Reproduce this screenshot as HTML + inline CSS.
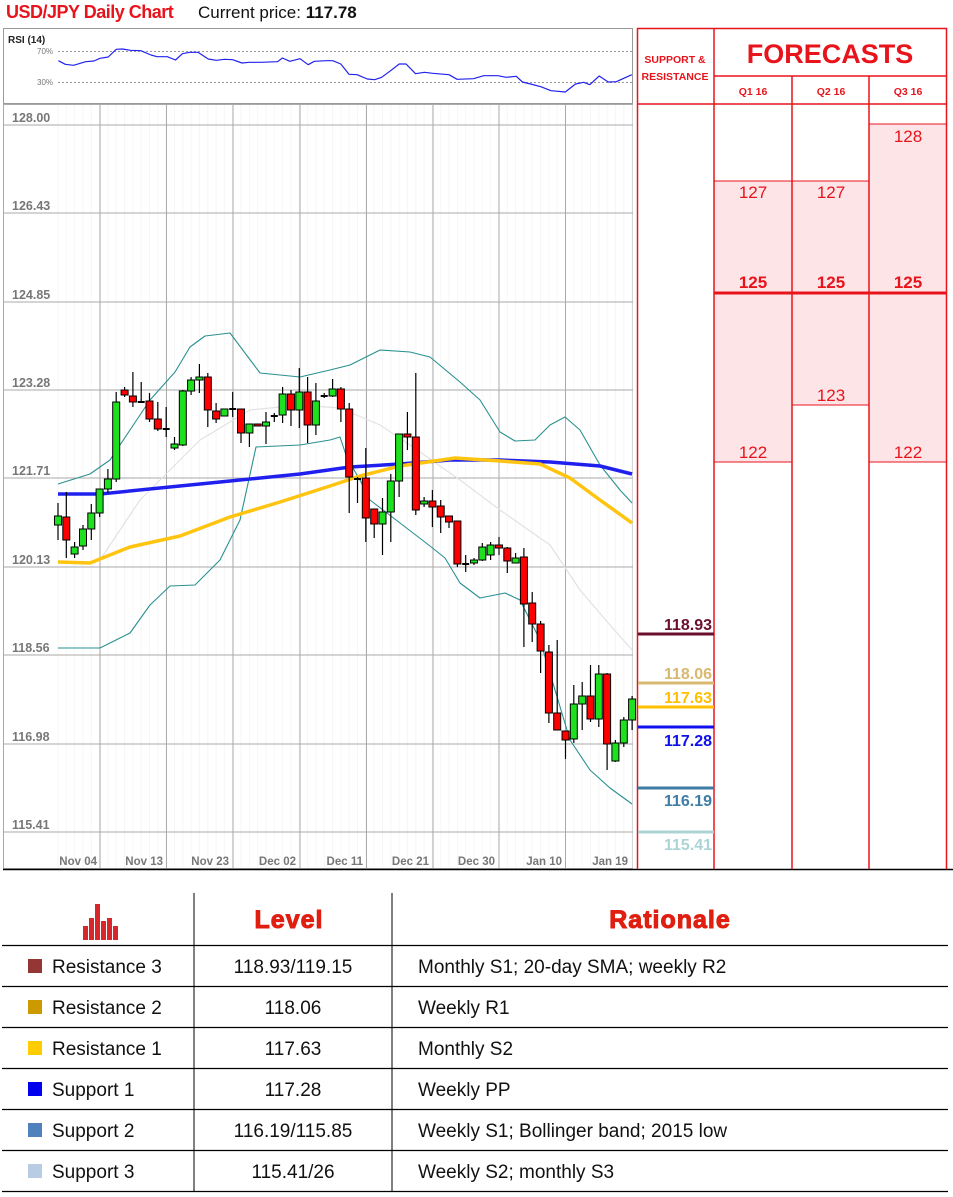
<!DOCTYPE html>
<html><head><meta charset="utf-8"><style>
body{margin:0;width:953px;height:1197px;background:#fff;position:relative;overflow:hidden;font-family:"Liberation Sans",sans-serif}
.a{position:absolute}
</style></head><body>
<div class="a" style="left:6px;top:2px;font-size:18px;font-weight:bold;color:#e8141c;letter-spacing:-0.5px">USD/JPY Daily Chart</div>
<div class="a" style="left:198px;top:3px;font-size:17px;color:#111">Current price: <b>117.78</b></div>
<svg class="a" style="left:0;top:0" width="953" height="1197" id="s" xmlns="http://www.w3.org/2000/svg"></svg>
<script>
var S='';
function L(x1,y1,x2,y2,c,w,e){S+='<line x1="'+x1+'" y1="'+y1+'" x2="'+x2+'" y2="'+y2+'" stroke="'+c+'" stroke-width="'+w+'" '+(e||'')+'/>';}
function R(x,y,w,h,f,s,sw){S+='<rect x="'+x+'" y="'+y+'" width="'+w+'" height="'+h+'" fill="'+f+'" stroke="'+(s||'none')+'" stroke-width="'+(sw||0)+'"/>';}
function T(x,y,t,st,a){S+='<text x="'+x+'" y="'+y+'" style="'+st+'" text-anchor="'+(a||'start')+'">'+t+'</text>';}
function P(pts,c,w,o){S+='<polyline fill="none" stroke="'+c+'" stroke-width="'+w+'" stroke-linejoin="round" '+(o||'')+' points="'+pts.map(function(p){return p[0]+','+p[1]}).join(' ')+'"/>';}
R(3.5,28.5,629,75,'#fff','#999',1);
T(8,43,'RSI (14)','font:bold 10px Liberation Sans;fill:#222');
L(58,51.5,632,51.5,'#777',0.8,'stroke-dasharray="2,2"');L(58,82.5,632,82.5,'#777',0.8,'stroke-dasharray="2,2"');
T(37,54,'70%','font:8px Liberation Sans;fill:#777');T(37,85,'30%','font:8px Liberation Sans;fill:#777');
var r=[[143,182],[160,193],[180,196],[210,185],[230,183],[245,175],[265,171],[285,148],[300,147],[320,151],[345,152],[370,165],[385,170],[410,170],[430,180],[447,161],[465,157],[485,157],[510,177],[530,181],[550,178],[570,179],[593,189],[610,187],[640,187],[680,185],[692,174],[710,184],[735,176],[755,194],[770,184],[800,182],[815,182],[835,192],[855,223],[875,224],[900,237],[918,239],[935,232],[955,214],[978,192],[995,192],[1018,221],[1040,217],[1060,220],[1100,224],[1120,238],[1160,236],[1185,227],[1220,227],[1240,232],[1265,229],[1280,246],[1300,252],[1325,260],[1350,272],[1385,276],[1410,252],[1430,247],[1445,254],[1468,228],[1490,246],[1510,245],[1548,224]];
P(r.map(function(p){return[(p[0]/2.45).toFixed(1),(p[1]/3).toFixed(1)]}),'#2222ee',1.2);
R(3.5,104.5,629,764,'#fff','#aaa',1);
for(var i=0;i<70;i++){var x=58+i*8.32;L(x,105,x,868,'#f6f6f6',1);}
var gy=[125,213,302,390,478,567,655,744,832],gl=['128.00','126.43','124.85','123.28','121.71','120.13','118.56','116.98','115.41'];
gy.forEach(function(y,i){L(4,y,633,y,'#aaa',1);T(12,y-3,gl[i],'font:bold 12.5px Liberation Sans;fill:#777');});
var gx=[100,166.5,233,300,366.5,433,499,565.5];gx.forEach(function(x){L(x,105,x,869,'#aaa',1);});
var xl=['Nov 04','Nov 13','Nov 23','Dec 02','Dec 11','Dec 21','Dec 30','Jan 10','Jan 19'];
[97,163,229,296,363,429,495,562,628].forEach(function(x,i){T(x,865,xl[i],'font:bold 11.5px Liberation Sans;fill:#777','end');});
L(3,869.5,953,869.5,'#000',1.5);
P([[100,560],[140,500],[200,440],[250,410],[300,405],[340,408],[380,425],[410,445],[460,480],[500,510],[550,545],[580,590],[610,625],[632,650]],'#e2e2e2',1.2);
P([[58,484],[90,474],[110,460],[130,430],[150,400],[175,372],[190,347],[205,336],[230,333],[260,373],[300,377],[330,370],[350,365],[380,350],[410,352],[430,357],[460,382],[480,400],[500,432],[515,441],[535,440],[550,425],[565,417],[580,430],[600,465],[620,490],[632,503]],'#2a9090',1.1);
P([[58,648],[100,648],[130,633],[150,605],[170,586],[195,585],[220,560],[240,520],[256,447],[300,445],[330,440],[340,437],[347,458],[360,480],[370,500],[400,523],[430,546],[445,558],[460,583],[480,598],[505,593],[520,600],[540,640],[555,690],[570,740],[590,770],[610,788],[632,804]],'#2a9090',1.1);
P([[58,494],[100,494],[200,484],[300,474],[350,467],[400,464],[450,460],[500,460],[550,462],[600,466],[632,474]],'#2020ee',3.5);
P([[58,562],[90,563],[130,547],[180,536],[230,517],[280,502],[330,486],[360,476],[400,466],[455,458],[500,461],[540,464],[570,478],[600,500],[632,523]],'#ffc410',3.5);
var c=[[516,525,503,540,1],[517,540,492,558,0],[547,554,542,558,1],[529,546,525,550,1],[513,529,504,540,1],[489,513,489,517,1],[479,489,469,493,1],[402,479,392,482,1],[390,395,387,397,0],[396,402,372,407,0],[402,402,382,403,2],[401,419,393,422,0],[419,429,402,431,0],[429,429,407,437,2],[444,448,437,450,1],[391,445,390,446,1],[380,391,377,395,1],[377,380,364,393,1],[377,410,373,427,0],[411,419,403,423,0],[409,416,409,416,1],[409,409,392,417,2],[409,433,409,443,0],[424,433,424,447,1],[424,426,424,426,0],[422,426,412,444,1],[416,416,413,422,2],[394,415,387,423,1],[394,410,390,426,0],[392,410,368,428,1],[392,425,377,443,0],[401,425,383,435,1],[396,396,393,398,2],[389,396,379,397,1],[389,409,387,422,0],[409,477,403,513,0],[479,479,477,503,2],[478,518,448,542,0],[509,524,509,538,0],[512,524,498,555,1],[481,512,474,542,1],[434,481,434,497,1],[434,437,412,450,0],[437,510,373,515,0],[501,504,497,507,1],[501,507,490,527,0],[506,517,500,533,0],[516,522,516,528,0],[521,564,521,567,0],[564,564,555,572,2],[560,563,558,565,1],[547,560,543,561,1],[545,555,542,560,1],[545,548,537,555,0],[548,561,547,573,0],[558,563,553,563,1],[557,604,548,647,0],[603,624,592,642,0],[624,651,621,673,0],[652,713,645,723,0],[713,730,640,723,0],[731,740,731,759,0],[704,739,685,743,1],[696,704,682,730,1],[696,719,665,722,0],[674,719,665,727,1],[674,744,673,770,0],[743,761,740,762,1],[720,743,717,747,1],[699,720,696,730,1]];
c.forEach(function(d,i){var x=(58+i*8.32).toFixed(1);L(x,d[2],x,d[3],'#000',1.2);
 if(d[4]==2)L(x-3.5,d[0],+x+3.5,d[0],'#000',2);else R(x-3.5,d[0],7,Math.max(d[1]-d[0],2),d[4]?'#1ee01e':'#f00','#000',1);});
var red='#e8141c';
R(714,181,155,111,'#fde4e6');R(869,124,78,168,'#fde4e6');
R(714,294,78,168,'#fde4e6');R(792,294,77,111,'#fde4e6');R(869,294,78,168,'#fde4e6');
L(637.5,28,637.5,869,red,1.5);L(946.5,28,946.5,869,red,1.5);L(637,28.5,947,28.5,red,1.5);
L(714,28,714,869,red,1.5);L(792,76,792,869,red,1.5);L(869,76,869,869,red,1.5);
L(714,76,947,76,red,1.5);L(637,104,947,104,red,1.5);
L(714,181,869,181,red,1);L(869,124,947,124,red,1);L(714,293,947,293,red,3);
L(714,462,792,462,red,1);L(792,405,869,405,red,1);L(869,462,947,462,red,1);
T(675,63,'SUPPORT &amp;','font:bold 10.5px Liberation Sans;fill:'+red,'middle');T(675,80,'RESISTANCE','font:bold 10.5px Liberation Sans;fill:'+red,'middle');
T(830,63,'FORECASTS','font:bold 27px Liberation Sans;fill:'+red,'middle');
['Q1 16','Q2 16','Q3 16'].forEach(function(q,i){T([753,831,908][i],95,q,'font:bold 10.5px Liberation Sans;fill:'+red,'middle');});
var nf='font:17px Liberation Sans;fill:'+red,bf='font:bold 17px Liberation Sans;fill:'+red;
T(753,198,'127',nf,'middle');T(831,198,'127',nf,'middle');T(908,142,'128',nf,'middle');
T(753,288,'125',bf,'middle');T(831,288,'125',bf,'middle');T(908,288,'125',bf,'middle');
T(831,401,'123',nf,'middle');T(753,458,'122',nf,'middle');T(908,458,'122',nf,'middle');
[[634,'#6b0f2e','118.93',630],[683,'#d9b870','118.06',679],[707,'#ffc000','117.63',703],[727,'#1010ee','117.28',746],[788,'#3e7ea6','116.19',806],[832,'#add4d4','115.41',850]].forEach(function(d){
 L(638,d[0],714,d[0],d[1],3);T(712,d[3],d[2],'font:bold 16px Liberation Sans;fill:'+d[1],'end');});
L(194,893,194,1191,'#000',1);L(392,893,392,1191,'#000',1);
[945,986,1027,1068,1109,1150,1191].forEach(function(y){L(2,y+.5,948,y+.5,'#000',1.3);});
[[83,926,5,14],[89,918,5,22],[95,904,5,36],[101,921,5,19],[107,918,5,22],[113,926,5,14]].forEach(function(b){R(b[0],b[1],b[2],b[3],'#d8262a');});
T(289,928,'Level','font:900 25px Liberation Sans;fill:#e01f10;letter-spacing:1px;stroke:#e01f10;stroke-width:1','middle');
T(670,928,'Rationale','font:900 25px Liberation Sans;fill:#e01f10;letter-spacing:1px;stroke:#e01f10;stroke-width:1','middle');
var rows=[['#943634','Resistance 3','118.93/119.15','Monthly S1; 20-day SMA; weekly R2'],['#cc9900','Resistance 2','118.06','Weekly R1'],['#ffcc00','Resistance 1','117.63','Monthly S2'],['#0000ee','Support 1','117.28','Weekly PP'],['#4f81bd','Support 2','116.19/115.85','Weekly S1; Bollinger band; 2015 low'],['#b8cce4','Support 3','115.41/26','Weekly S2; monthly S3']];
rows.forEach(function(d,i){var y=945+i*41;R(28,y+14,14,14,d[0]);var st='font:19px Liberation Sans;fill:#111';
 T(52,y+28,d[1],st);T(293,y+28,d[2],st,'middle');T(418,y+28,d[3],st);});
document.getElementById('s').innerHTML=S;
</script>
</body></html>
